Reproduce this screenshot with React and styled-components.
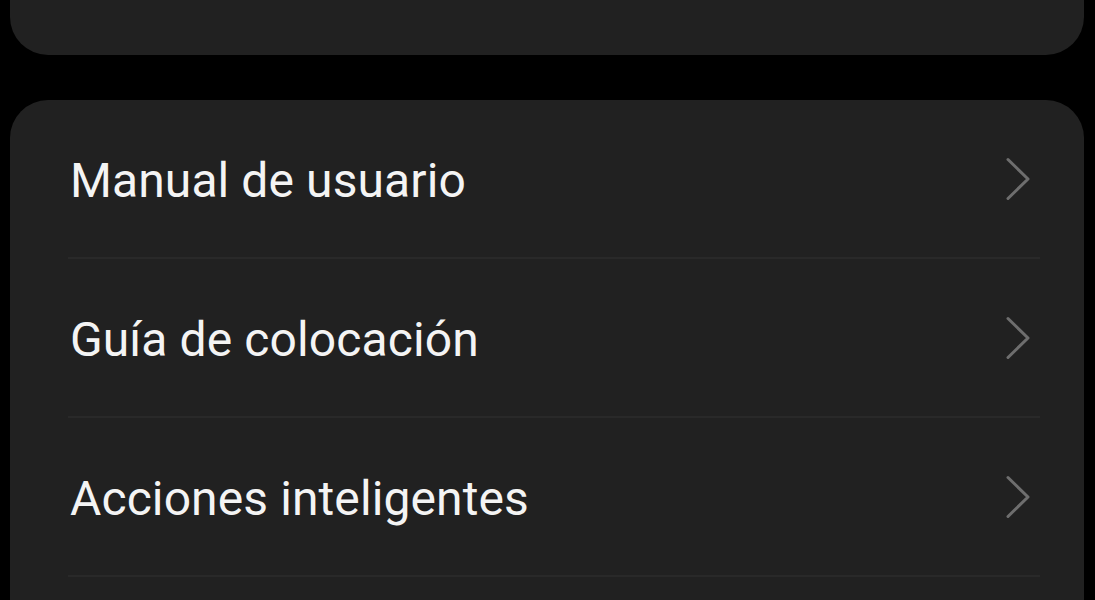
import React from "react";
import styled, { createGlobalStyle } from "styled-components";

const Global = createGlobalStyle`
  html, body { margin: 0; padding: 0; background: #000; }
  body { font-family: Roboto, "Noto Sans", "Liberation Sans", sans-serif; overflow: hidden; }
`;

const Page = styled.div`
  display: flex;
  flex-direction: column;
  gap: 45px;
  padding: 0 11px 0 10px;
  height: 600px;
  overflow: hidden;
`;

const Card = styled.div`
  background: #212121;
  border-radius: 38px;
  margin-top: ${(p) => p.$offset || 0}px;
  flex-shrink: 0;
`;

const Row = styled.div`
  height: ${(p) => p.$h || 157}px;
  display: flex;
  align-items: center;
  justify-content: space-between;
  padding: 0 50px 0 60px;
  box-sizing: border-box;
`;

const Divider = styled.div`
  height: 2px;
  background: #292929;
  margin: 0 44px 0 58px;
`;

const Label = styled.span`
  color: ${(p) => (p.$muted ? "#5a5a5a" : "#f4f4f4")};
  font-size: 48px;
  letter-spacing: 0.1px;
  line-height: 1;
  padding-top: 4px;
`;

const Value = styled.span`
  color: #555;
  font-size: 44px;
  line-height: 1;
  margin-left: auto;
  margin-right: 55px;
  padding-top: 4px;
`;

const Chevron = () => (
  <svg width="30" height="44" viewBox="0 0 30 44" fill="none">
    <path d="M4 2.5 L24 22 L4 41.5" stroke="#6e6e6e" strokeWidth="3" strokeLinecap="round" strokeLinejoin="round" />
  </svg>
);

const items = ["Manual de usuario", "Guía de colocación", "Acciones inteligentes", "Información"];

export default function App() {
  return (
    <>
      <Global />
      <Page>
        <Card $offset={-93}>
          <Row $h={148}>
            <Label $muted>Actualización de software</Label>
            <Value>Versión 2.0</Value>
          </Row>
        </Card>
        <Card>
          {items.map((t, i) => (
            <React.Fragment key={t}>
              {i > 0 && <Divider />}
              <Row>
                <Label>{t}</Label>
                <Chevron />
              </Row>
            </React.Fragment>
          ))}
        </Card>
      </Page>
    </>
  );
}
